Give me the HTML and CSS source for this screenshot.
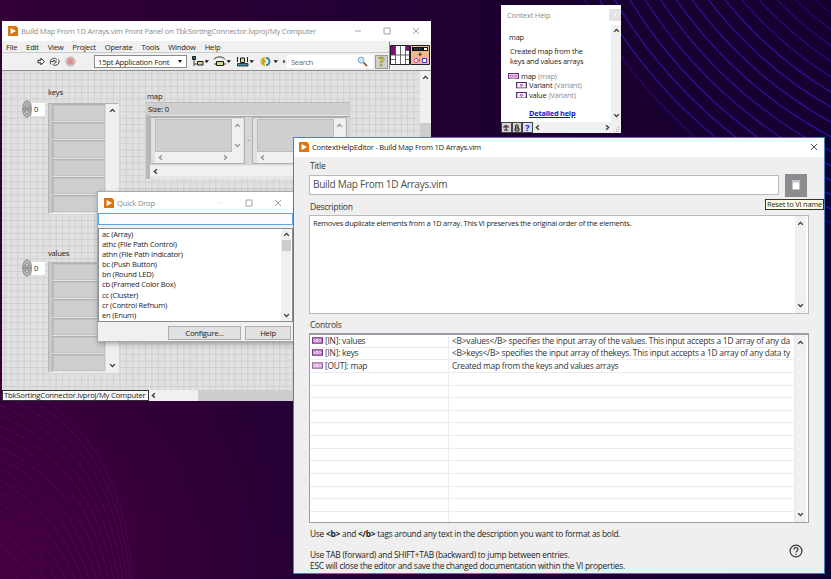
FILE: index.html
```html
<!DOCTYPE html>
<html lang="en">
<head>
<meta charset="utf-8">
<title>Context Help Editor</title>
<link rel="stylesheet" href="styles.css">
</head>
<body>
<svg class="defs" aria-hidden="true">
  <symbol id="up" viewBox="0 0 6 6"><path d="M1 4.2 3 2l2 2.2" /></symbol>
  <symbol id="down" viewBox="0 0 6 6"><path d="M1 1.8 3 4l2-2.2" /></symbol>
  <symbol id="left" viewBox="0 0 6 6"><path d="M4.2 1 2 3l2.2 2" /></symbol>
  <symbol id="right" viewBox="0 0 6 6"><path d="M1.8 1 4 3 1.8 5" /></symbol>
  <symbol id="min" viewBox="0 0 8 8"><path d="M1 4h6" /></symbol>
  <symbol id="max" viewBox="0 0 8 8"><path d="M1 1h6v6H1z" /></symbol>
  <symbol id="close" viewBox="0 0 8 8"><path d="m1 1 6 6M7 1 1 7" /></symbol>
  <symbol id="logo" viewBox="0 0 10 10"><path d="M0 0h8l2 2v8H0z" fill="#de7410" stroke="none"/><path d="M2.600 2v6l5.400-3z" fill="#fff" stroke="none"/></symbol>
  <symbol id="term" viewBox="0 0 10 6"><path d="M.5.5h9v5h-9z" fill="#fff" stroke="#46285e"/><path d="M3.700 3 5 1.700 6.300 3 5 4.300z" fill="#e9b6ee" stroke="#9a2ca0" stroke-width=".8"/><path d="M1.500 1v4M8.500 1v4" stroke="#b79abf" stroke-width=".5"/></symbol>
  <symbol id="mapterm" viewBox="0 0 10 6"><path d="M.5.5h9v5h-9z" fill="#f3d9f3" stroke="#5e2868"/><path d="M2 3l1.200-1.200L4.400 3 3.200 4.200zM5.600 3l1.200-1.200L8 3 6.800 4.200z" fill="#fff" stroke="#9a2ca0" stroke-width=".8"/></symbol>
  <symbol id="termfill" viewBox="0 0 10 6"><path d="M.5.5h9v5h-9z" fill="#c58fca" stroke="#7d3088"/><path d="M1.800 2v2M3 3l1.500-1.300L6 3 4.500 4.300zM7 2l1 1-1 1" fill="none" stroke="#fff" stroke-width=".8"/></symbol>
  <symbol id="spin" viewBox="0 0 10 18"><ellipse cx="5" cy="9" rx="4.300" ry="8.300" fill="#b9b9b9" stroke="#8a8a8a"/><path d="M2.500 7 5 3.500 7.500 7zM2.500 11 5 14.500 7.500 11z" fill="#d9d9d9" stroke="#7b7b7b" stroke-width=".8"/><path d="M1 9h8" stroke="#777"/></symbol>
</svg>

<svg class="wallpaper" viewBox="0 0 831 579" fill="none">
  <g stroke="#2d17b2" stroke-width="1.100">
    <circle cx="1034" cy="-248" r="513" opacity=".5"/><circle cx="1034" cy="-248" r="500"/><circle cx="1034" cy="-248" r="487"/><circle cx="1034" cy="-248" r="474"/><circle cx="1034" cy="-248" r="461"/><circle cx="1034" cy="-248" r="448"/><circle cx="1034" cy="-248" r="435"/><circle cx="1034" cy="-248" r="422"/><circle cx="1034" cy="-248" r="409"/><circle cx="1034" cy="-248" r="396"/><circle cx="1034" cy="-248" r="383" opacity=".8"/><circle cx="1034" cy="-248" r="370" opacity=".7"/><circle cx="1034" cy="-248" r="357" opacity=".6"/><circle cx="1034" cy="-248" r="344" opacity=".5"/><circle cx="1034" cy="-248" r="331" opacity=".4"/>
  </g>
  <g stroke="#65106f" stroke-width=".7" opacity=".6">
    <path id="wave" d="M-60 360C40 380 134 425 134 620"/>
    <use href="#wave" transform="translate(-2 8)"/><use href="#wave" transform="translate(-4 17)"/><use href="#wave" transform="translate(-7 26)"/><use href="#wave" transform="translate(-10 35)"/><use href="#wave" transform="translate(-13 44)"/><use href="#wave" transform="translate(-16 53)"/><use href="#wave" transform="translate(-20 62)"/><use href="#wave" transform="translate(-24 71)"/><use href="#wave" transform="translate(-28 80)"/><use href="#wave" transform="translate(-32 89)"/><use href="#wave" transform="translate(-36 98)"/><use href="#wave" transform="translate(-41 107)"/><use href="#wave" transform="translate(-46 117)"/><use href="#wave" transform="translate(-51 127)"/><use href="#wave" transform="translate(-56 138)"/><use href="#wave" transform="translate(-62 149)"/>
  </g>
</svg>

<section class="window panel">
  <header class="titlebar">
    <svg class="logo"><use href="#logo"/></svg>
    <span class="caption">Build Map From 1D Arrays.vim Front Panel on TbkSortingConnector.lvproj/My Computer</span>
    <svg class="wbtn"><use href="#min"/></svg><svg class="wbtn"><use href="#max"/></svg><svg class="wbtn"><use href="#close"/></svg>
  </header>
  <div class="bars">
    <div class="barcol">
      <nav class="menu"><span>File</span><span>Edit</span><span>View</span><span>Project</span><span>Operate</span><span>Tools</span><span>Window</span><span>Help</span></nav>
      <div class="toolbar">
        <svg class="runs" viewBox="0 0 46 13" fill="none">
          <path d="M3 5.200h3v-2l3.300 3.300L6 9.800v-2H3z" fill="#fff" stroke="#222"/>
          <path d="M16 9.500a3.800 3.800 0 0 1 2.500-6.200c1.800-.4 3 .5 3.400 1.700M23.500 4.500a3.800 3.800 0 0 1-2.600 5.800c-1.600.3-2.600-.3-3.400-1.500M15.500 6.500h3.200V5l2.800 1.800-2.800 2" stroke="#333" stroke-width=".9"/>
          <circle cx="35.500" cy="6.500" r="4.600" fill="#cfb4b4" stroke="#c4b8b8"/><rect x="33.200" y="4.200" width="4.600" height="4.600" fill="#e08a8c"/>
        </svg>
        <div class="fontbox"><span>15pt Application Font</span><i class="tri"></i></div>
        <svg class="tools" viewBox="0 0 96 13" fill="none" stroke="#1b1b1b">
          <path d="M3 2v9M3 9h3" stroke-width=".8"/><path d="M1.500 1.500h3v3h-3z" fill="#277f80"/><path d="M6.500 6.500H12v3.500H6.500z" fill="#d8d889"/>
          <path d="M23 4.500C25 1 32 1 34 4.500M23 9h2M33 9h2" stroke-width=".9"/><path d="M25.500 6.500h7v4h-7z" fill="#d8d889"/>
          <path d="M46.500 2v5M56.500 2v5" /><path d="M46.500 8.500h10.500v2.500H46.500z" fill="#418b9c" stroke-width=".8"/><path d="M49.500 3h4v4.500h-4z" fill="#d8d889"/>
          <path d="M74 3a3.500 3.500 0 1 0 0 7" stroke="#d2b91c" stroke-width="2.200"/><path d="M75 3a3.500 3.500 0 1 1 0 7" stroke="#39849f" stroke-width="2"/><path d="m72.500 4.500 2.500 2-2.500 2z" fill="#e4cc39" stroke="#67651c" stroke-width=".6"/>
          <path d="M14 5.500h3.500L15.700 7.700zM36 5.500h3.500L37.700 7.700zM59 5.500h3.500L60.700 7.700zM83 5.500h3.500L84.700 7.700zM92.500 5v3L94 6.500z" fill="#111" stroke-width=".5"/>
        </svg>
        <div class="search"><span>Search</span>
          <svg viewBox="0 0 12 12" fill="none"><path d="m7 7 4 4" stroke="#8c5c3c" stroke-width="2"/><circle cx="4.500" cy="4.500" r="3.300" fill="#c8e8fa" stroke="#6ea3cc"/></svg>
        </div>
        <div class="helpbtn">?</div>
      </div>
    </div>
    <svg class="conn" viewBox="0 0 42 28">
      <path d="M.5.500V28" stroke="#888"/><path d="M1.500 4.500h19v19h-19z" fill="#fff" stroke="#222"/><path d="M2 5h4.500v9H2zM16.500 5H20v4h-3.500z" fill="#7f0b80"/>
      <path d="M6.500 4.500v19M11.500 4.500v19M16.500 4.500v19M1.500 14h19M16.500 9.500h4M1.500 18.500h5M16.500 18.500h4" stroke="#444" stroke-width=".8"/>
      <path d="M21.500 4.500h19v19h-19z" fill="#f2b98b" stroke="#222"/><path d="M23 6h16v4H23z" fill="#111"/><path d="M25 8h8" stroke="#aaa" stroke-width=".7" stroke-dasharray="1.500 1"/><path d="M35 7h3v2h-3z" fill="#fff"/><path d="M31 11.500v3m-1.500-1.500 1.500 1.500 1.500-1.500" stroke="#222" fill="none"/>
      <circle cx="27" cy="19.500" r="2" fill="#fff" stroke="#e129bc"/><path d="M33.500 17.500h4v4h-4z" fill="#fff" stroke="#4432e0"/><path d="M30.500 18.500v2" stroke="#c41b37"/>
    </svg>
  </div>
  <div class="client">
    <div class="canvas">
      <label class="node keys-label">keys</label>
      <div class="node index keys-index"><svg><use href="#spin"/></svg><span>0</span></div>
      <div class="node array keys-array">
        <div class="cells"><i></i><i></i><i></i><i></i><i></i><i></i></div>
        <div class="vscroll"><svg><use href="#up"/></svg><svg><use href="#down"/></svg></div>
      </div>
      <label class="node values-label">values</label>
      <div class="node index values-index"><svg><use href="#spin"/></svg><span>0</span></div>
      <div class="node array values-array">
        <div class="cells"><i></i><i></i><i></i><i></i><i></i><i></i></div>
        <div class="vscroll"><svg><use href="#up"/></svg><svg><use href="#down"/></svg></div>
      </div>
      <label class="node map-label">map</label>
      <div class="node map">
        <div class="size">Size: 0</div>
        <div class="pair">
          <div class="variant"><div class="vrow"><i></i><div class="vscroll dim"><svg><use href="#up"/></svg><svg><use href="#down"/></svg></div></div><div class="hscroll dim"><svg><use href="#left"/></svg><svg><use href="#right"/></svg></div></div>
          <span class="dash">-</span>
          <div class="variant"><div class="vrow"><i></i><div class="vscroll dim"><svg><use href="#up"/></svg><svg><use href="#down"/></svg></div></div><div class="hscroll dim"><svg><use href="#left"/></svg><svg><use href="#right"/></svg></div></div>
        </div>
        <div class="hscroll wide"><svg><use href="#left"/></svg></div>
      </div>
    </div>
    <div class="vscroll main"><svg><use href="#up"/></svg><b></b></div>
  </div>
  <footer class="status"><span class="path">TbkSortingConnector.lvproj/My Computer</span><svg><use href="#left"/></svg><b></b></footer>
</section>

<section class="window ctx">
  <header><span>Context Help</span><i>x</i></header>
  <div class="ctxbody">
    <div class="ctxtext">
      <p class="name">map</p>
      <p class="desc">Created map from the<br>keys and values arrays</p>
      <p class="item"><svg><use href="#mapterm"/></svg>map <em>(map)</em></p>
      <p class="item sub"><svg><use href="#term"/></svg>Variant <em>(Variant)</em></p>
      <p class="item sub"><svg><use href="#term"/></svg>value <em>(Variant)</em></p>
      <a>Detailed help</a>
    </div>
    <div class="vscroll"><svg><use href="#up"/></svg><svg><use href="#down"/></svg></div>
  </div>
  <footer>
    <span class="tbtn"><svg viewBox="0 0 8 8" fill="none"><path d="M1 3h6M2 6h4M4 1v6M2 2h4" stroke="#333"/><path d="M5 2.500h2" stroke="#c34"/></svg></span>
    <span class="tbtn"><svg viewBox="0 0 8 8" fill="none"><path d="M2.500 4V2a1.300 1.300 0 0 1 2.600 0v2M2 4h4v3H2z" stroke="#333" fill="#999"/></svg></span>
    <span class="tbtn q">?</span>
    <div class="hscroll"><svg><use href="#left"/></svg><svg><use href="#right"/></svg></div>
    <svg class="grip" viewBox="0 0 6 6" fill="#aaa"><path d="M4 0h1v1H4zM4 2h1v1H4zM2 2h1v1H2zM4 4h1v1H4zM2 4h1v1H2zM0 4h1v1H0z"/></svg>
  </footer>
</section>

<section class="window quick">
  <header class="titlebar">
    <svg class="logo"><use href="#logo"/></svg>
    <span class="caption">Quick Drop</span>
    <svg class="wbtn faint"><use href="#min"/></svg><svg class="wbtn"><use href="#max"/></svg><svg class="wbtn"><use href="#close"/></svg>
  </header>
  <div class="entry"></div>
  <div class="list">
    <ul><li>ac (Array)</li><li>athc (File Path Control)</li><li>athn (File Path Indicator)</li><li>bc (Push Button)</li><li>bn (Round LED)</li><li>cb (Framed Color Box)</li><li>cc (Cluster)</li><li>cr (Control Refnum)</li><li>en (Enum)</li></ul>
    <div class="vscroll"><svg><use href="#up"/></svg><b></b><svg><use href="#down"/></svg></div>
  </div>
  <div class="buttons"><button class="conf">Configure...</button><button class="hlp">Help</button></div>
</section>

<section class="window editor">
  <header class="titlebar">
    <svg class="logo"><use href="#logo"/></svg>
    <span class="caption">ContextHelpEditor - Build Map From 1D Arrays.vim</span>
    <svg class="wbtn"><use href="#close"/></svg>
  </header>
  <div class="form">
    <label>Title</label>
    <div class="titlerow">
      <div class="titlebox">Build Map From 1D Arrays.vim</div>
      <div class="reset"><svg viewBox="0 0 10 12"><path d="M1 1.500h8v1H1zM1.500 3.200h7V10.500h-7z" fill="#fff"/></svg><span class="tip">Reset to VI name</span></div>
    </div>
    <label>Description</label>
    <div class="area"><p>Removes duplicate elements from a 1D array. This VI preserves the original order of the elements.</p><div class="vscroll"><svg><use href="#up"/></svg><svg><use href="#down"/></svg></div></div>
    <label>Controls</label>
    <div class="table">
      <div class="rows">
        <div class="row"><span><svg><use href="#termfill"/></svg>[IN]: values</span><span>&lt;B&gt;values&lt;/B&gt; specifies the input array of the values. This input accepts a 1D array of any da</span></div>
        <div class="row"><span><svg><use href="#termfill"/></svg>[IN]: keys</span><span>&lt;B&gt;keys&lt;/B&gt; specifies the input array of thekeys. This input accepts a 1D array of any data ty</span></div>
        <div class="row"><span><svg class="pale"><use href="#termfill"/></svg>[OUT]: map</span><span>Created map from the keys and values arrays</span></div>
        <div class="row"><span></span><span></span></div><div class="row"><span></span><span></span></div><div class="row"><span></span><span></span></div><div class="row"><span></span><span></span></div><div class="row"><span></span><span></span></div><div class="row"><span></span><span></span></div><div class="row"><span></span><span></span></div><div class="row"><span></span><span></span></div><div class="row"><span></span><span></span></div><div class="row"><span></span><span></span></div><div class="row"><span></span><span></span></div><div class="row"><span></span><span></span></div>
      </div>
      <div class="vscroll"><svg><use href="#up"/></svg><svg><use href="#down"/></svg></div>
    </div>
    <div class="notes">
      <div>
        <p>Use <b>&lt;b&gt;</b> and <b>&lt;/b&gt;</b> tags around any text in the description you want to format as bold.</p>
        <p class="keysnote">Use TAB (forward) and SHIFT+TAB (backward) to jump between entries.<br>ESC will close the editor and save the changed documentation within the VI properties.</p>
      </div>
      <svg class="help" viewBox="0 0 14 14" fill="none" stroke="#333"><circle cx="7" cy="7" r="5.900" stroke-width="1.200"/><path d="M5 5.600c0-2.600 4-2.600 4 0 0 1.400-2 1.400-2 3M7 9.700v1.200" stroke-width="1.200"/></svg>
    </div>
  </div>
</section>
</body>
</html>
```
FILE: styles.css
```css
* { box-sizing: border-box; letter-spacing: -.029em; }
body {
  margin: 0;
  width: 831px;
  height: 579px;
  position: relative;
  overflow: hidden;
  font: 7.65px/10px "Open Sans", "Noto Sans", sans-serif;
  color: #1c1c1c;
  background:
    radial-gradient(ellipse 300px 260px at 0 560px, #43003f, transparent),
    linear-gradient(90deg, #330038, #230035 40%, #1a0030 70%, #160030);
}
p, ul { margin: 0; padding: 0; list-style: none; }
svg { display: block; flex: none; }
.defs { position: absolute; width: 0; height: 0; }
.wallpaper { position: absolute; inset: 0; width: 831px; height: 579px; }
.window { position: absolute; display: flex; flex-direction: column; background: #f0f0f0; }

.titlebar { display: flex; align-items: center; background: #fff; color: #8c8c8c; height: 20px; flex: none; white-space: nowrap; }
.logo { width: 10px; height: 10px; }
.caption { flex: 1; }
.wbtn { width: 8px; height: 8px; fill: none; stroke: #8b8b8b; stroke-width: .8; }
.faint { opacity: .25; }

.vscroll { display: flex; flex-direction: column; align-items: center; justify-content: space-between; background: #f0f0f0; padding: 3px 0; flex: none; }
.hscroll { display: flex; align-items: center; justify-content: space-between; background: #f0f0f0; padding: 0 3px; flex: none; }
.vscroll svg, .hscroll svg, .status svg { width: 7px; height: 7px; fill: none; stroke: #333; stroke-width: 1.1; }
.dim svg { stroke: #8f8f8f; }

/* Front panel */
.panel { left: 2px; top: 21px; width: 429px; height: 380px; }
.panel .titlebar { padding: 0 11px 0 6px; }
.panel .caption { margin-left: 3px; }
.panel .wbtn { margin-left: 21px; }
.bars { display: flex; height: 30px; flex: none; border-bottom: 1px solid #8c8c8c; }
.barcol { flex: 1; }
.conn { width: 42px; height: 28px; }
.menu { display: flex; height: 12px; line-height: 12px; padding-left: 4px; border-bottom: 1px solid #ccc; gap: 8.8px; font-size: 7.7px; }
.toolbar { display: flex; align-items: center; height: 17px; padding-left: 33px; }
.runs { width: 46px; height: 13px; }
.fontbox { display: flex; align-items: center; justify-content: space-between; width: 93px; height: 13px; margin-left: 13px; padding: 0 4px 0 3px; background: #fff; border: 1px solid #8b8b8b; }
.tri { border: 2.5px solid transparent; border-top: 3px solid #111; border-bottom: 0; }
.tools { width: 96px; height: 13px; margin-left: 4px; }
.search { display: flex; justify-content: space-between; align-items: center; flex: 1; height: 13px; padding: 0 5px 0 4px; background: #fff; font-size: 7.4px; color: #666; }
.search svg { width: 11px; height: 11px; }
.helpbtn { width: 13px; height: 14px; border: 1px solid #9b9b9b; background: #cfcfcf; font-weight: bold; font-size: 12px; line-height: 12px; text-align: center; color: #e8da14; -webkit-text-stroke: .4px #554f08; margin: 0 1px 0 2px; }
.client { display: flex; flex: 1; min-height: 0; }
.canvas {
  flex: 1;
  position: relative;
  overflow: hidden;
  background-color: #e1e1e1;
  background-image: linear-gradient(90deg, #cfcfcf 1px, transparent 1px), linear-gradient(#cfcfcf 1px, transparent 1px);
  background-size: 6.4px 6.4px;
  background-position: 2.500px 2px;
}
.node { position: absolute; }
.keys-label { left: 46px; top: 16px; }
.values-label { left: 46px; top: 177px; }
.map-label { left: 145px; top: 19.500px; }
.index { display: flex; align-items: center; }
.index svg { width: 10px; height: 18px; }
.index span { width: 13px; height: 13px; background: #fff; padding-left: 2px; line-height: 12px; }
.keys-index { left: 20px; top: 29px; }
.values-index { left: 20px; top: 188px; }
.array { display: flex; left: 46px; width: 71px; height: 111px; background: #c9c9c9; border: 1px solid #b5b5b5; border-right-color: #eee; border-bottom-color: #eee; padding-left: 3px; }
.keys-array { top: 32px; }
.values-array { top: 191px; }
.cells { flex: 1; display: flex; flex-direction: column; }
.cells i { flex: 1; background: #cecece; border: 1px solid #b2b2b2; border-right-color: #ddd; border-bottom-color: #e4e4e4; outline: 1px solid #c2c2c2; outline-offset: -2px; }
.array .vscroll { width: 12px; }
.map { left: 144px; top: 31px; width: 204px; height: 77px; background: #e6e6e6; border-left: 4px solid #b8b8b8; display: flex; flex-direction: column; }
.size { height: 13px; line-height: 12px; background: #cfcfcf; margin-left: -4px; padding-left: 2px; flex: none; border-top: 1px solid #bdbdbd; }
.pair { display: flex; height: 49px; margin-top: 1px; background: #d6d6d6; border-top: 1px solid #aaa; flex: none; }
.variant { width: 95px; height: 47px; background: #e1e1e1; border: 1px solid #b1b1b1; padding: 1px 1px 0 4px; display: flex; flex-direction: column; }
.vrow { display: flex; flex: 1; }
.vrow i { flex: 1; background: #cfcfcf; border: 1px solid #bdbdbd; }
.vrow .vscroll { width: 11px; }
.variant .hscroll { height: 11px; padding: 0 14px 0 2px; }
.dash { width: 7px; text-align: center; line-height: 44px; color: #777; }
.map .wide { height: 10px; margin-top: 1px; padding-left: 2px; }
.main { width: 11px; }
.main svg { flex: none; }
.main b { width: 11px; height: 140px; background: #cdcdcd; margin: 42px 0 auto; }
.status { display: flex; height: 11px; align-items: center; flex: none; }
.path { width: 147px; height: 11px; line-height: 9px; border: 1px solid #333; padding-left: 1px; background: #f7f7f7; font-size: 7.7px; white-space: nowrap; }
.status svg { margin-left: 1px; }
.status b { width: 222px; height: 11px; background: #cdcdcd; margin-left: 41px; }

/* Context help */
.ctx { left: 501px; top: 5px; width: 120px; height: 128px; background: #fff; }
.ctx header { display: flex; justify-content: space-between; height: 20px; line-height: 20px; padding-left: 6px; color: #8c8c8c; font-size: 7.6px; flex: none; }
.ctx header i { width: 12px; height: 12px; line-height: 11px; margin-top: 4px; background: #e3e3e3; color: #fafafa; text-align: center; font-style: normal; }
.ctxbody { display: flex; flex: 1; min-height: 0; }
.ctxtext { flex: 1; padding: 7px 0 0 7px; font-size: 7.45px; white-space: nowrap; }
.name { padding-left: 1px; }
.desc { padding: 4px 0 0 2px; margin-bottom: 5px; }
.item { display: flex; align-items: center; height: 9.500px; gap: 2px; }
.item svg { width: 11px; height: 6.500px; }
.item em { font-style: normal; color: #8c8c8c; }
.sub { padding-left: 8px; }
.ctxtext a { display: block; margin: 8px 0 0 21px; font-weight: bold; font-size: 7.4px; color: #1212d8; text-decoration: underline; }
.ctx .vscroll { width: 10px; padding: 2px 0 3px; }
.ctx footer { display: flex; height: 11px; background: #f0f0f0; flex: none; align-items: center; }
.tbtn { width: 10.500px; height: 11px; border: 1px solid #444; background: #d4d4d4; display: flex; align-items: center; justify-content: center; }
.tbtn svg { width: 8px; height: 8px; }
.q { background: #d8dffa; color: #1414c8; font-weight: bold; font-size: 9px; }
.ctx .hscroll { flex: 1; padding: 0 3px 0 1px; }
.grip { width: 6px; height: 6px; margin: 4px 1px 0 0; }

/* Quick drop */
.quick { left: 97px; top: 191px; width: 197px; height: 151px; border: 1px solid #a9a9a9; box-shadow: 1px 2px 5px rgba(0, 0, 0, .3); }
.quick .titlebar { padding: 0 11px 0 6px; height: 21px; }
.quick .caption { margin-left: 3px; }
.quick .wbtn { margin-left: 21px; }
.entry { height: 12px; border: 1px solid #58a7e5; background: #fafcff; flex: none; width: 195px; }
.list { display: flex; height: 94px; margin-top: 3px; border: 1px solid #888d94; background: #fff; flex: none; width: 195px; }
.list ul { flex: 1; padding: 0 0 0 3px; font-size: 7.6px; }
.list li { height: 10.100px; line-height: 10.100px; }
.list .vscroll { width: 10px; justify-content: flex-start; padding: 2px 0; margin-right: 1px; }
.list b { width: 9px; height: 11px; background: #cdcdcd; margin: 2px 0 auto; }
.buttons { display: flex; padding: 4px 1px 0 70px; gap: 4px; }
button { font: 7.7px/11px "Open Sans", sans-serif; color: #1c1c1c; height: 14px; padding: 0; background: #e1e1e1; border: 1px solid #adadad; border-radius: 0; }
.conf { width: 73px; }
.hlp { width: 46px; }

/* Editor */
.editor { left: 293px; top: 137px; width: 532px; height: 437px; border: 1px solid #3d85bf; background: #efefef; }
.editor .titlebar { height: 19px; padding: 0 6px 1px 5px; color: #1c1c1c; font-size: 7.61px; }
.editor .caption { margin-left: 3px; }
.editor .wbtn { stroke: #222; }
.form { padding: 0 15px; flex: 1; display: flex; flex-direction: column; }
.form > label { font-size: 8.5px; color: #333; height: 16px; line-height: 16px; padding-left: 1px; margin-top: 1px; flex: none; }
.titlerow { display: flex; justify-content: space-between; align-items: center; height: 24px; padding-right: 2px; flex: none; margin-top: -1px; }
.titlebox { width: 470px; height: 20px; line-height: 17px; border: 1px solid #b9b9b9; background: #fff; padding-left: 3px; font-size: 10.07px; color: #4d4d4d; }
.reset { position: relative; width: 22px; height: 23px; background: #8b8b90; display: flex; align-items: center; justify-content: center; }
.reset svg { width: 10px; height: 12px; }
.tip { position: absolute; right: -17px; top: 25.500px; height: 11px; width: 59px; line-height: 9px; border: 1px solid #333; background: #ffffe6; font-size: 7.46px; white-space: nowrap; padding-left: 1px; }
.titlerow + label { margin-top: 2px; }
.area { display: flex; justify-content: space-between; height: 99px; border: 1px solid #b9b9b9; background: #fff; flex: none; }
.area p { padding: 2px 3px; font-size: 7.46px; }
.form .vscroll { width: 11px; margin-right: 2px; padding: 4px 0; }
.area + label { margin-top: 3px; }
.table { display: flex; height: 190px; border: 1px solid #9a9da6; border-top-width: 2px; background: #fff; flex: none; }
.rows { flex: 1; overflow: hidden; min-width: 0; border-right: 1px solid #e6e6e6; }
.row { display: flex; height: 12.650px; line-height: 12px; border-bottom: 1px solid #ececee; font-size: 8.38px; color: #333; white-space: nowrap; }
.row span { display: flex; align-items: center; flex: 1; padding-left: 3px; }
.row span:first-child { flex: none; width: 139px; padding-left: 2px; border-right: 1px solid #ececee; gap: 2px; }
.row svg { width: 11px; height: 7px; margin-top: -1px; }
.pale { opacity: .75; }
.notes { display: flex; justify-content: space-between; padding: 5px 6px 0 1px; font-size: 8.36px; line-height: 11px; }
.keysnote { margin-top: 10px; }
.help { width: 14px; height: 14px; margin-top: 16px; }
```
